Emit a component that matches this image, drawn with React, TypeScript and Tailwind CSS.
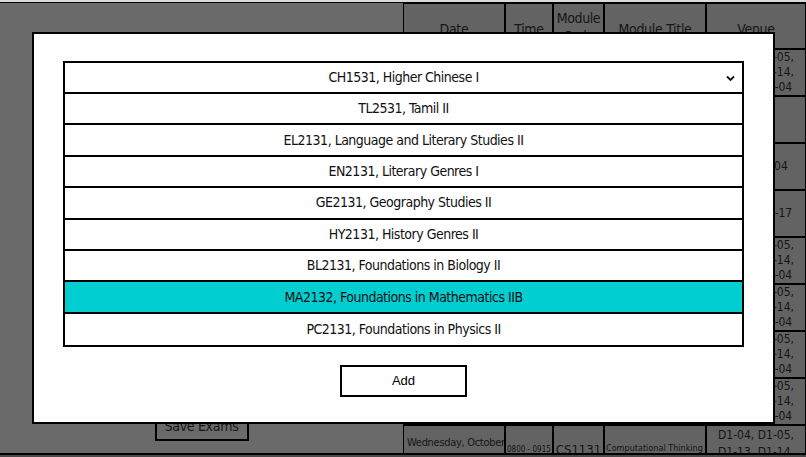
import React from 'react';

const narrow = "font-['DejaVu_Sans_Condensed','DejaVu_Sans',sans-serif] [font-stretch:condensed]";

const modules = [
  'TL2531, Tamil II',
  'EL2131, Language and Literary Studies II',
  'EN2131, Literary Genres I',
  'GE2131, Geography Studies II',
  'HY2131, History Genres II',
  'BL2131, Foundations in Biology II',
  'MA2132, Foundations in Mathematics IIB',
  'PC2131, Foundations in Physics II',
];

const full = 'D1-04, D1-05, D1-13, D1-14, D1-16, D2-04';

const venues = [full, '', 'COM2-0204', 'D1-16, D1-17', full, full, full, full];

const cell = 'border border-black bg-[#636363] text-[#151515] overflow-hidden';
const head = `${cell} bg-[#5f5f5f] flex items-center justify-center pt-[6px] text-[14px] tracking-[-0.3px]`;

const App: React.FC = () => {
  return (
    <div className={`relative w-[806px] h-[457px] overflow-hidden bg-[#6a6a6a] ${narrow}`}>
      <div className="h-[2px] bg-[#d9d9d9]" />
      <div className="flex h-[451px] border-t border-black overflow-hidden">
        {/* Left panel */}
        <div className="w-[403px] flex flex-col justify-end items-center pb-[12px]">
          <button className="w-[94px] h-[32px] border-2 border-black text-[14px] tracking-[-0.3px] text-[#151515] flex items-center justify-center pt-[2px]">
            Save Exams
          </button>
        </div>

        {/* Exam table */}
        <div className="flex-1 grid grid-cols-[102px_48px_51px_102px_1fr] auto-rows-[47px] grid-rows-[46px] content-start">
          <div className={head}>Date</div>
          <div className={head}>Time</div>
          <div className={`${cell} bg-[#5f5f5f] flex flex-col items-center pt-[5px] leading-[18px] text-[14px] tracking-[-0.4px]`}>
            <span>Module</span>
            <span>Code</span>
          </div>
          <div className={head}>Module Title</div>
          <div className={head}>Venue</div>
          {venues.map((v, i) => (
            <React.Fragment key={i}>
              <div className={`${cell} flex items-center px-[3px] text-[11px] tracking-[-0.3px] whitespace-nowrap`}>Monday, October</div>
              <div className={`${cell} flex items-end text-[8px] px-[1px] whitespace-nowrap`}>0800 - 0915</div>
              <div className={`${cell} flex items-end justify-center text-[13px] whitespace-nowrap`}>CS1131</div>
              <div className={`${cell} flex items-end text-[9px] px-[1px] whitespace-nowrap`}>Computational Thinking</div>
              <div className={`${cell} flex items-center justify-center text-center text-[12px] leading-[15px] px-[4px]`}>{v}</div>
            </React.Fragment>
          ))}
          <div className={`${cell} flex items-start pt-[9px] px-[3px] text-[11px] tracking-[-0.3px] whitespace-nowrap`}>Wednesday, October</div>
          <div className={`${cell} flex items-start pt-[18px] px-[1px] text-[8px] whitespace-nowrap`}>0800 - 0915</div>
          <div className={`${cell} flex items-start pt-[14px] justify-center text-[13px] whitespace-nowrap`}>CS1131</div>
          <div className={`${cell} flex items-start pt-[16px] text-[9px] px-[1px] whitespace-nowrap`}>Computational Thinking</div>
          <div className={`${cell} flex items-start justify-center text-center text-[12px] leading-[17px] pt-[1px] px-[6px]`}>{full}</div>
        </div>
      </div>
      <div className="h-[2px] bg-black" />
      <div className="h-[2px] bg-[#4a4a4a]" />

      {/* Modal */}
      <div className="absolute left-[32px] top-[32px] w-[743px] h-[392px] bg-white border-2 border-black px-[29px] pt-[27px]">
        <div className="border-2 border-black text-[14px] tracking-[-0.5px] text-[#111]">
          <div className="relative h-[31px] border-b-2 border-black flex items-center justify-center">
            CH1531, Higher Chinese I
            <svg className="absolute right-[7px] top-[12px]" width="9" height="7" viewBox="0 0 9 7">
              <path d="M1 1.5 L4.5 5 L8 1.5" fill="none" stroke="#111" strokeWidth="1.8" />
            </svg>
          </div>
          {modules.map((m, i) => (
            <div
              key={m}
              className={`h-[31.4px] flex items-center justify-center ${i < modules.length - 1 ? 'border-b-2 border-black' : ''} ${m.startsWith('MA2132') ? 'bg-[#00ced1]' : ''}`}
            >
              {m}
            </div>
          ))}
        </div>
        <div className="flex justify-center mt-[18px]">
          <button className="w-[127px] h-[32px] border-2 border-black text-[13px] tracking-normal font-['Liberation_Sans',sans-serif] [font-stretch:normal] text-black">
            Add
          </button>
        </div>
      </div>
    </div>
  );
};

export default App;
